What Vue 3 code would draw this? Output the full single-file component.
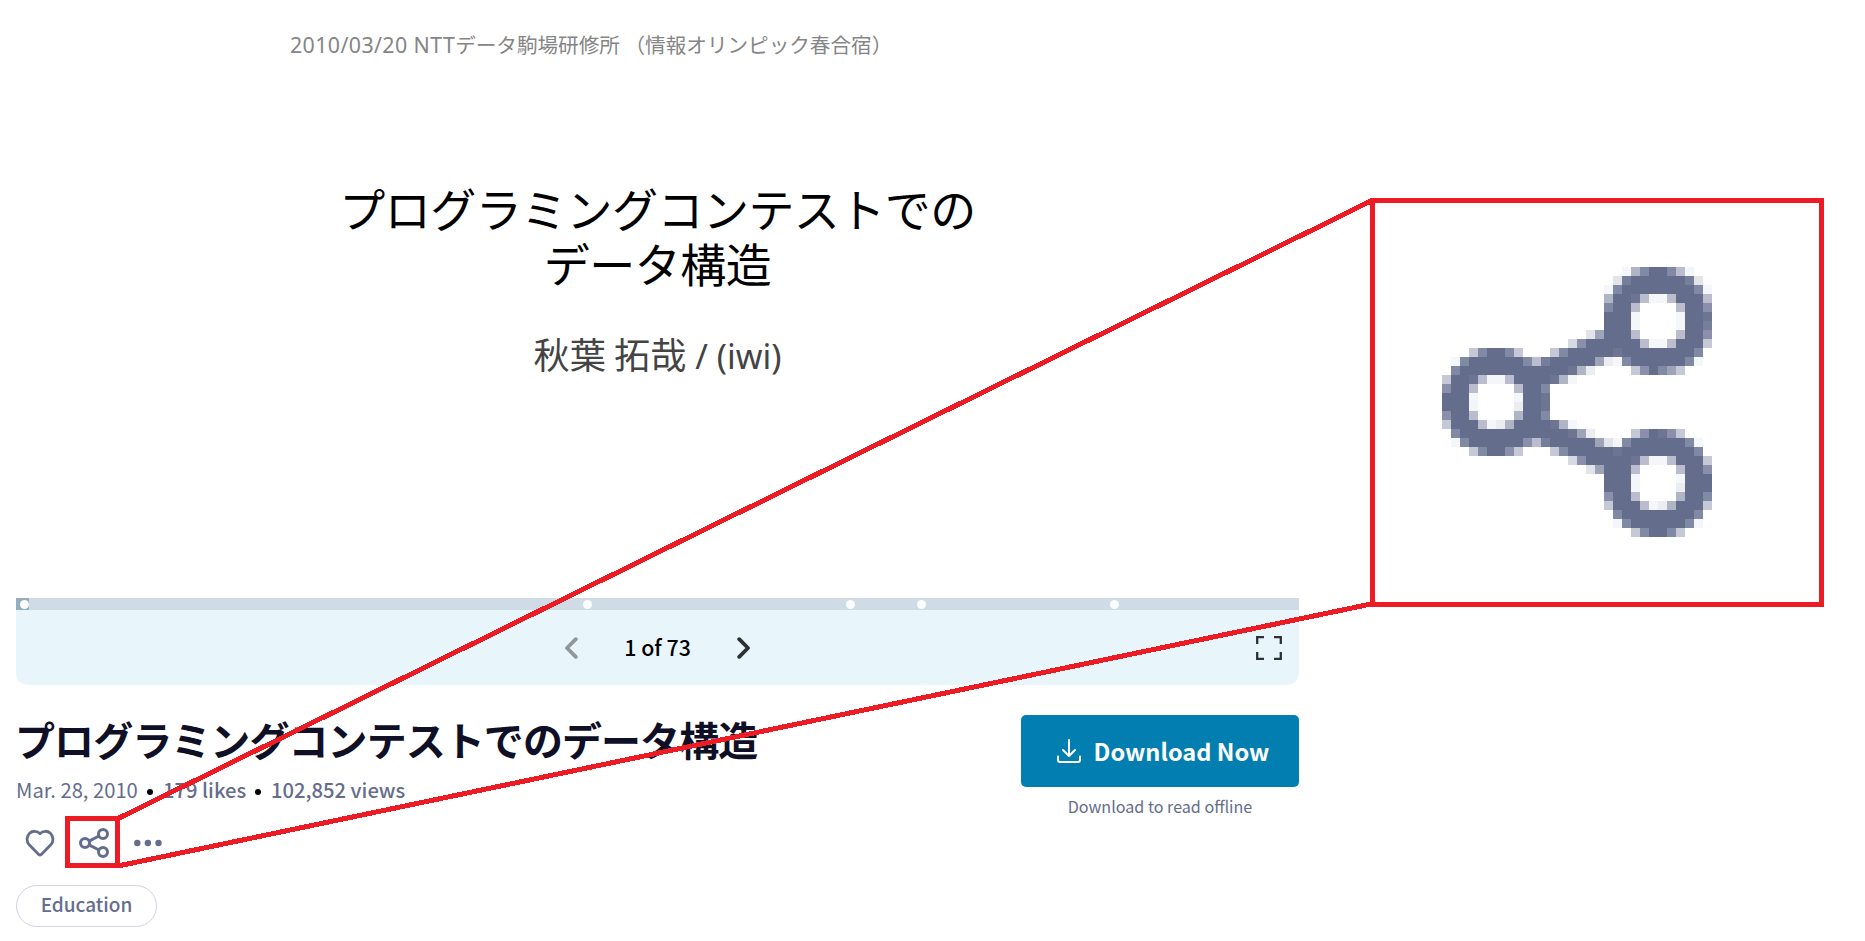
<script setup>
const markers = [8.5, 571.5, 834.5, 905.5, 1098]

const palette = {
  D: '#646d8c', e: '#6d7593', c: '#757e9b', b: '#808aa5', a: '#8b8fab', 9: '#9ea3b7',
  7: '#b0b5c6', 6: '#bbbdcf', 5: '#c5c9d5', 4: '#d7dae2', 3: '#e2e4e9', 2: '#ecedf1', 1: '#f5f6f9',
}

// Each row: left offset in cells, then one shade key per cell.
const rows = [
  [20, '17bDDb61'],
  [19, '3cDDDDDDc3'],
  [18, '1bDDDDDDDDb1'],
  [18, '7DDe6116DDD6'],
  [18, 'bDD6....6DDa'],
  [18, 'DDD1....1DDe'],
  [18, 'DDD1....1DDc'],
  [16, '39DDD6....6DDa'],
  [14, '4aDDDDDD6116DDD5'],
  [3, '5bDDb5...5bDDDDDeDDDDDDDDb'],
  [1, '1bDDDDDDb6cDDDDD921bDDDDDDb1'],
  [1, 'bDDDDDDDDDDDDe72....5aDb95'],
  [0, '5DDe6116DDDDe71'],
  [0, 'aDD6....6DDb'],
  [0, 'DDD1....1DDe'],
  [0, 'DDD1....2DDe'],
  [0, 'aDD6....7DDb'],
  [0, '5DDD6127DDDDe71'],
  [1, 'bDDDDDDDDDDDDe92....5aDea5'],
  [1, '1bDDDDDDa6cDDDDD931bDDDDDDb1'],
  [3, '5bDDa5...5bDDDDDeDDDDDDDDb'],
  [14, '4aDDDDDe6116DDD5'],
  [16, '39DDD6....6DDa'],
  [18, 'DDD1....1DDD'],
  [18, 'DDD1....2DDD'],
  [18, 'aDD6....7DDb'],
  [18, '5DDD6127DDD5'],
  [19, 'bDDDDDDDDb'],
  [19, '1bDDDDDDb1'],
  [21, '5bDDb5'],
]

const cells = rows.flatMap(([offset, keys], y) =>
  [...keys]
    .map((key, i) => ({ x: offset + i, y, fill: palette[key] }))
    .filter((cell) => cell.fill)
)
</script>

<template>
  <div class="page">
    <main class="viewer">
      <section class="slide">
        <p class="venue"><span class="latin">2010/03/20 NTT</span>データ駒場研修所 <span class="paren">（情報オリンピック春合宿）</span></p>
        <h2 class="slide-title">プログラミングコンテストでの<br />データ構造</h2>
        <p class="author">秋葉 拓哉<span class="latin"> / (iwi)</span></p>
      </section>

      <div class="progress">
        <div class="progress-fill"></div>
        <i v-for="m in markers" :key="m" class="marker" :style="{ left: m + 'px' }"></i>
      </div>

      <nav class="controls">
        <span></span>
        <div class="pager">
          <svg class="chev" width="14" height="22" viewBox="0 0 14 22"><path d="M11.8 2.2 3 11l8.800 8.800" fill="none" stroke="#8f979b" stroke-width="3.800" stroke-linecap="round" stroke-linejoin="round" /></svg>
          <span class="count">1 of 73</span>
          <svg class="chev" width="14" height="22" viewBox="0 0 14 22"><path d="M2.2 2.2 11 11l-8.800 8.800" fill="none" stroke="#2d3134" stroke-width="3.800" stroke-linecap="round" stroke-linejoin="round" /></svg>
        </div>
        <svg class="full" width="26" height="24" viewBox="0 0 26 24"><path d="M1.200 8V1.200H8M18 1.200h6.800V8M24.800 16v6.800H18M8 22.800H1.200V16" fill="none" stroke="#2d3134" stroke-width="2.300" /></svg>
      </nav>

      <section class="info">
        <div class="details">
          <h1 class="title">プログラミングコンテストでのデータ構造</h1>
          <div class="meta">
            <span class="date">Mar. 28, 2010</span><i class="dot"></i><b class="likes">179 likes</b><i class="dot"></i><b class="views">102,852 views</b>
          </div>
          <div class="actions">
            <svg width="32" height="28" viewBox="0 0 32 28"><path d="M16 4.600C18.800 1.500 23.600 1.600 26.400 4.300c3.300 3.200 3.400 8.200.4 11.500L17.300 25.400c-.8.700-1.800.7-2.600 0L5.200 15.800C2.200 12.500 2.300 7.500 5.600 4.300 8.400 1.600 13.200 1.500 16 4.600z" fill="none" stroke="#646d8c" stroke-width="2.800" stroke-linejoin="round" /></svg>
            <svg width="30" height="30" viewBox="0 0 30 30" fill="none" stroke="#646d8c" stroke-width="3"><circle cx="6" cy="15" r="4.500" /><circle cx="24" cy="6" r="4.500" /><circle cx="24" cy="24" r="4.500" /><path d="M10 13.100l10-5.100M10 16.900l10 5.100" /></svg>
            <svg width="28" height="8" viewBox="0 0 28 8" fill="#646d8c"><circle cx="3.300" cy="4" r="3.200" /><circle cx="13.900" cy="4" r="3.200" /><circle cx="24.500" cy="4" r="3.200" /></svg>
          </div>
          <span class="tag">Education</span>
        </div>
        <div class="download">
          <button class="btn">
            <svg width="24" height="24" viewBox="0 0 24 24" fill="none" stroke="#fff" stroke-width="2" stroke-linecap="round" stroke-linejoin="round"><path d="M12 1v16M6 11l6 6 6-6M1 17.500V21q0 2 2 2h18q2 0 2-2v-3.500" /></svg>
            <span>Download Now</span>
          </button>
          <p class="note">Download to read offline</p>
        </div>
      </section>
    </main>

    <svg class="callout" width="1865" height="941" viewBox="0 0 1865 941" shape-rendering="crispEdges">
      <g fill="none" stroke="#ed1c24" stroke-width="5">
        <rect x="67.500" y="818.500" width="50" height="47" />
        <path d="M118 818.500 1371 201M118 866 1371 604" stroke-linecap="round" />
      </g>
      <rect x="1372.500" y="200.500" width="449" height="404" fill="#fff" stroke="#ed1c24" stroke-width="5" />
      <g transform="translate(1442 267) scale(9)">
        <rect v-for="(c, i) in cells" :key="i" :x="c.x" :y="c.y" width="1" height="1" :fill="c.fill" />
      </g>
    </svg>
  </div>
</template>

<style>
body { margin: 0; background: #fff; }
</style>

<style scoped>
.page { position: relative; width: 1865px; height: 941px; overflow: hidden; background: #fff; font-family: "Noto Sans CJK JP", "Noto Sans", sans-serif; }
.viewer { width: 1283px; padding-left: 16px; }
.slide { height: 598px; overflow: hidden; color: #000; }
p, h1, h2 { margin: 0; white-space: nowrap; }
.venue { margin: 28px 0 0 274px; height: 32px; line-height: 32px; font-size: 20.6px; font-weight: 400; color: #858585; }
.venue .latin { font-family: "Noto Sans", sans-serif; font-size: 21.4px; line-height: 1; letter-spacing: 0.38px; }
.slide-title { margin-top: 120px; text-align: center; font-size: 46px; letter-spacing: -0.55px; line-height: 55px; font-weight: 400; }
.author { margin-top: 37px; height: 52px; line-height: 52px; text-align: center; font-size: 36.2px; font-weight: 400; color: #444; }
.author .latin { font-family: "Noto Sans", sans-serif; font-size: 34px; line-height: 1; white-space: pre; }
.progress { position: relative; height: 12px; background: #d0dce5; }
.progress-fill { width: 13px; height: 12px; background: #96adc1; }
.marker { position: absolute; top: 2px; width: 9px; height: 9px; margin-left: -4.5px; border-radius: 50%; background: #fbfcfd; }
.controls { display: grid; grid-template-columns: 1fr auto 1fr; align-items: center; height: 75px; box-sizing: border-box; background: #e8f6fc; border-radius: 0 0 12px 12px; }
.pager { display: flex; align-items: center; gap: 46px; }
.count { width: 67px; padding-bottom: 2px; text-align: center; white-space: nowrap; font-size: 21.4px; line-height: 30px; font-weight: 500; color: #000; }
.chev { display: block; }
.full { justify-self: end; margin-right: 17px; }
.info { display: flex; justify-content: space-between; }
.title { margin: 26px 0 0 -1px; height: 60px; line-height: 56px; font-size: 40px; letter-spacing: -0.93px; font-weight: 700; color: #0f0f25; }
.meta { display: flex; align-items: center; height: 28px; margin-top: 5px; font-size: 20.2px; line-height: 28px; color: #646d8c; white-space: nowrap; }
.meta b { font-weight: 500; }
.date { width: 121px; }
.likes { width: 82px; }
.dot { width: 6px; height: 6px; margin: 3px 10px 0; border-radius: 50%; background: #000; }
.actions { display: flex; align-items: center; height: 30px; margin: 24px 0 0 8px; gap: 23px; }
.actions svg + svg + svg { margin-left: 2px; }
.tag { display: block; box-sizing: border-box; width: 141px; height: 42px; margin-top: 27px; border: 1px solid #cfd3e4; border-radius: 21px; text-align: center; font-size: 19px; line-height: 35px; font-weight: 500; color: #646d8c; }
.download { width: 278px; padding-top: 30px; }
.btn { display: flex; align-items: center; justify-content: center; gap: 13px; width: 278px; height: 72px; padding: 0 0 0 6px; border: 0; border-radius: 5px; background: #037eb1; color: #fff; font-family: inherit; font-size: 23.6px; line-height: 36px; font-weight: 700; white-space: nowrap; }
.note { margin-top: 7px; text-align: center; font-size: 16.1px; line-height: 24px; color: #646d8c; }
.callout { position: absolute; left: 0; top: 0; pointer-events: none; }
</style>
